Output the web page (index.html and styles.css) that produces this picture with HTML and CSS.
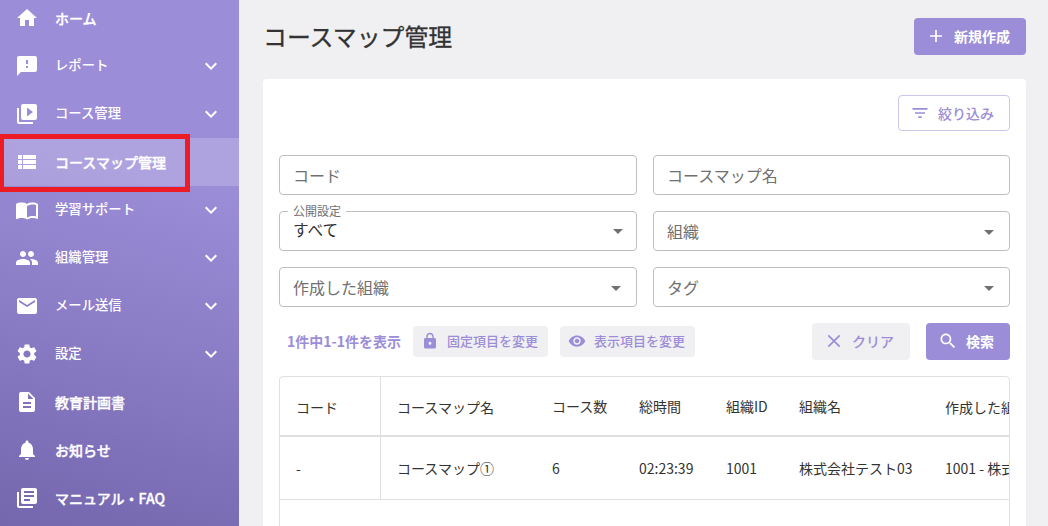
FILE: index.html
```html
<!DOCTYPE html>
<html lang="ja">
<head>
<meta charset="utf-8">
<title>コースマップ管理</title>
<link rel="stylesheet" href="styles.css">
</head>
<body>
<div class="app">
  <nav class="sidebar">
    <a class="item"><svg class="icon" viewBox="0 0 24 24"><path d="M10 20v-6h4v6h5v-8h3L12 3 2 12h3v8z"/></svg><span class="label">ホーム</span></a>
    <a class="item group"><svg class="icon" viewBox="0 0 24 24"><path d="M20 2H4c-1.1 0-1.99.9-1.99 2L2 22l4-4h14c1.1 0 2-.9 2-2V4c0-1.1-.9-2-2-2zm-7 12h-2v-2h2v2zm0-4h-2V6h2v4z"/></svg><span class="label">レポート</span><svg class="icon chevron" viewBox="0 0 24 24"><path d="M16.59 8.59 12 13.17 7.41 8.59 6 10l6 6 6-6z"/></svg></a>
    <a class="item group"><svg class="icon" viewBox="0 0 24 24"><path d="M4 6H2v14c0 1.1.9 2 2 2h14v-2H4V6zm16-4H8c-1.1 0-2 .9-2 2v12c0 1.1.9 2 2 2h12c1.1 0 2-.9 2-2V4c0-1.1-.9-2-2-2zm-8 12.500v-9l6 4.500-6 4.500z"/></svg><span class="label">コース管理</span><svg class="icon chevron" viewBox="0 0 24 24"><path d="M16.59 8.59 12 13.17 7.41 8.59 6 10l6 6 6-6z"/></svg></a>
    <a class="item selected"><svg class="icon" viewBox="0 0 24 24"><path d="M3 14h4v-4H3v4zm0 5h4v-4H3v4zM3 9h4V5H3v4zm5 5h13v-4H8v4zm0 5h13v-4H8v4zM8 5v4h13V5H8z"/></svg><span class="label">コースマップ管理</span><span class="highlight"></span></a>
    <a class="item group"><svg class="icon" viewBox="0 0 24 24"><path d="M21 5c-1.110-.35-2.330-.5-3.500-.5-1.950 0-4.050.4-5.500 1.500-1.450-1.100-3.550-1.500-5.500-1.500S2.450 4.900 1 6v14.650c0 .25.25.5.5.5.1 0 .15-.05.25-.05C3.100 20.450 5.050 20 6.500 20c1.950 0 4.050.4 5.500 1.500 1.350-.85 3.800-1.500 5.500-1.500 1.650 0 3.350.3 4.750 1.050.1.05.15.05.25.05.25 0 .5-.25.5-.5V6c-.6-.45-1.250-.75-2-1zm0 13.500c-1.100-.35-2.300-.5-3.500-.5-1.700 0-4.150.65-5.500 1.500V8c1.350-.85 3.800-1.500 5.500-1.500 1.200 0 2.400.15 3.500.5v11.500z"/></svg><span class="label">学習サポート</span><svg class="icon chevron" viewBox="0 0 24 24"><path d="M16.59 8.59 12 13.17 7.41 8.59 6 10l6 6 6-6z"/></svg></a>
    <a class="item group"><svg class="icon" viewBox="0 0 24 24"><path d="M16 11c1.660 0 2.990-1.340 2.990-3S17.660 5 16 5s-3 1.340-3 3 1.340 3 3 3zm-8 0c1.660 0 2.990-1.340 2.990-3S9.660 5 8 5 5 6.340 5 8s1.340 3 3 3zm0 2c-2.330 0-7 1.170-7 3.500V19h14v-2.500c0-2.330-4.670-3.500-7-3.500zm8 0c-.29 0-.62.02-.97.05 1.160.84 1.970 1.970 1.970 3.450V19h6v-2.500c0-2.330-4.670-3.500-7-3.500z"/></svg><span class="label">組織管理</span><svg class="icon chevron" viewBox="0 0 24 24"><path d="M16.59 8.59 12 13.17 7.41 8.59 6 10l6 6 6-6z"/></svg></a>
    <a class="item group"><svg class="icon" viewBox="0 0 24 24"><path d="M20 4H4c-1.100 0-1.990.9-1.990 2L2 18c0 1.100.9 2 2 2h16c1.100 0 2-.9 2-2V6c0-1.100-.9-2-2-2zm0 4-8 5-8-5V6l8 5 8-5v2z"/></svg><span class="label">メール送信</span><svg class="icon chevron" viewBox="0 0 24 24"><path d="M16.59 8.59 12 13.17 7.41 8.59 6 10l6 6 6-6z"/></svg></a>
    <a class="item group"><svg class="icon" viewBox="0 0 24 24"><path d="M19.140 12.940c.04-.3.06-.61.06-.94 0-.32-.02-.64-.07-.94l2.030-1.580c.18-.14.23-.41.12-.61l-1.920-3.320c-.12-.22-.37-.29-.59-.22l-2.390.96c-.5-.38-1.030-.7-1.620-.94l-.36-2.540c-.04-.24-.24-.41-.48-.41h-3.840c-.24 0-.43.17-.47.41l-.36 2.540c-.59.24-1.130.57-1.620.94l-2.390-.96c-.22-.08-.47 0-.59.22L2.740 8.870c-.12.21-.08.47.12.61l2.030 1.580c-.05.3-.09.63-.09.94s.02.64.07.94l-2.030 1.580c-.18.14-.23.41-.12.61l1.920 3.320c.12.22.37.29.59.22l2.390-.96c.5.38 1.030.7 1.620.94l.36 2.540c.05.24.24.41.48.41h3.840c.24 0 .44-.17.47-.41l.36-2.540c.59-.24 1.130-.56 1.620-.94l2.390.96c.22.08.47 0 .59-.22l1.920-3.320c.12-.22.07-.47-.12-.61l-2.010-1.580zM12 15.600c-1.980 0-3.600-1.620-3.600-3.600s1.620-3.600 3.600-3.600 3.600 1.620 3.600 3.600-1.620 3.600-3.600 3.600z"/></svg><span class="label">設定</span><svg class="icon chevron" viewBox="0 0 24 24"><path d="M16.59 8.59 12 13.17 7.41 8.59 6 10l6 6 6-6z"/></svg></a>
    <a class="item"><svg class="icon" viewBox="0 0 24 24"><path d="M14 2H6c-1.100 0-1.990.9-1.990 2L4 20c0 1.100.89 2 1.990 2H18c1.100 0 2-.9 2-2V8l-6-6zm2 16H8v-2h8v2zm0-4H8v-2h8v2zm-3-5V3.500L18.500 9H13z"/></svg><span class="label">教育計画書</span></a>
    <a class="item"><svg class="icon" viewBox="0 0 24 24"><path d="M12 22c1.100 0 2-.9 2-2h-4c0 1.100.89 2 2 2zm6-6v-5c0-3.070-1.640-5.640-4.500-6.320V4c0-.83-.67-1.500-1.500-1.500s-1.500.67-1.500 1.500v.68C7.630 5.360 6 7.920 6 11v5l-2 2v1h16v-1l-2-2z"/></svg><span class="label">お知らせ</span></a>
    <a class="item"><svg class="icon" viewBox="0 0 24 24"><path d="M4 6H2v14c0 1.100.9 2 2 2h14v-2H4V6zm16-4H8c-1.100 0-2 .9-2 2v12c0 1.100.9 2 2 2h12c1.100 0 2-.9 2-2V4c0-1.100-.9-2-2-2zm-1 9H9V9h10v2zm-4 4H9v-2h6v2zm4-8H9V5h10v2z"/></svg><span class="label">マニュアル・FAQ</span></a>
  </nav>

  <main class="main">
    <header class="header">
      <h1 class="title">コースマップ管理</h1>
      <button class="btn primary create"><svg class="btn-icon" viewBox="0 0 20 20"><path d="M4 10h12M10 4v12" class="line"/></svg><span class="text">新規作成</span></button>
    </header>

    <section class="card">
      <div class="card-top">
        <button class="btn outlined"><svg class="btn-icon" viewBox="0 0 24 24"><path d="M10 18h4v-2h-4v2zM3 6v2h18V6H3zm3 7h12v-2H6v2z"/></svg>絞り込み</button>
      </div>

      <div class="fields">
        <div class="field">コード</div>
        <div class="field">コースマップ名</div>
        <div class="field select filled"><span class="floating">公開設定</span><span class="value">すべて</span><svg class="caret" viewBox="0 0 24 24"><path d="m7 10 5 5 5-5z"/></svg></div>
        <div class="field select"><span>組織</span><svg class="caret" viewBox="0 0 24 24"><path d="m7 10 5 5 5-5z"/></svg></div>
        <div class="field select"><span>作成した組織</span><svg class="caret" viewBox="0 0 24 24"><path d="m7 10 5 5 5-5z"/></svg></div>
        <div class="field select"><span>タグ</span><svg class="caret" viewBox="0 0 24 24"><path d="m7 10 5 5 5-5z"/></svg></div>
      </div>

      <div class="toolbar">
        <span class="count text">1件中1-1件を表示</span>
        <button class="btn soft small"><svg class="small-icon" viewBox="0 0 24 24"><path d="M18 8h-1V6c0-2.760-2.240-5-5-5S7 3.240 7 6v2H6c-1.100 0-2 .9-2 2v10c0 1.100.9 2 2 2h12c1.100 0 2-.9 2-2V10c0-1.100-.9-2-2-2zm-6 9c-1.100 0-2-.9-2-2s.9-2 2-2 2 .9 2 2-.9 2-2 2zm3.100-9H8.900V6c0-1.710 1.390-3.100 3.100-3.100s3.100 1.390 3.100 3.100v2z"/></svg><span class="text">固定項目を変更</span></button>
        <button class="btn soft small"><svg class="small-icon" viewBox="0 0 24 24"><path d="M12 4.500C7 4.500 2.730 7.610 1 12c1.730 4.390 6 7.500 11 7.500s9.270-3.110 11-7.500c-1.730-4.390-6-7.500-11-7.500zM12 17c-2.760 0-5-2.240-5-5s2.240-5 5-5 5 2.240 5 5-2.240 5-5 5zm0-8c-1.660 0-3 1.340-3 3s1.340 3 3 3 3-1.340 3-3-1.340-3-3-3z"/></svg><span class="text">表示項目を変更</span></button>
        <div class="actions">
          <button class="btn soft clear"><svg class="btn-icon" viewBox="0 0 20 20"><path d="M4.300 4.300l11.400 11.400M15.700 4.300L4.300 15.700" class="line"/></svg><span class="text">クリア</span></button>
          <button class="btn primary search"><svg class="btn-icon" viewBox="0 0 24 24"><path d="M15.500 14h-.79l-.28-.27C15.410 12.590 16 11.110 16 9.500 16 5.910 13.090 3 9.500 3S3 5.910 3 9.500 5.910 16 9.500 16c1.610 0 3.090-.59 4.230-1.570l.27.28v.79l5 4.990L20.490 19l-4.990-5zm-6 0C7.010 14 5 11.990 5 9.500S7.010 5 9.500 5 14 7.010 14 9.500 11.990 14 9.500 14z"/></svg><span class="text">検索</span></button>
        </div>
      </div>

      <div class="table">
        <div class="row head">
          <span class="cell pinned">コード</span><span class="cell low">コースマップ名</span><span class="cell">コース数</span><span class="cell">総時間</span><span class="cell">組織ID</span><span class="cell">組織名</span><span class="cell low">作成した組織</span>
        </div>
        <div class="row">
          <span class="cell pinned">-</span><span class="cell">コースマップ①</span><span class="cell">6</span><span class="cell">02:23:39</span><span class="cell">1001</span><span class="cell">株式会社テスト03</span><span class="cell">1001 - 株式会社テスト03</span>
        </div>
      </div>
    </section>
  </main>
</div>
</body>
</html>
```
FILE: styles.css
```css
* { box-sizing: border-box; }

body {
  margin: 0;
  height: 526px;
  overflow: hidden;
  background: #f0f0f2;
  color: #333;
  font-family: "Noto Sans CJK JP", sans-serif;
}

svg { display: block; flex: none; fill: currentColor; }

.app { display: flex; height: 526px; }

/* Sidebar */
.sidebar {
  flex: none;
  width: 239px;
  height: 526px;
  margin-right: 24px;
  overflow: hidden;
  background: linear-gradient(195deg, #9c8dd8 0, #9c8dd8 32%, #7467ae 100%);
  color: #fff;
}

.item {
  position: relative;
  display: flex;
  align-items: center;
  height: 48px;
  padding: 0 16px 0 15px;
  font-size: 14px;
  font-weight: 500;
  line-height: 20px;
  -webkit-text-stroke: .35px currentColor;
}

.item:first-child { margin-top: -6px; }

.icon { width: 24px; height: 24px; }

.label { margin-left: 16px; }

.group { font-size: 13.33px; -webkit-text-stroke: 0; }
.group .label { padding: 0 0 2px; }

.chevron { margin-left: auto; }

.selected { z-index: 1; background: rgba(255, 255, 255, .2); }

.highlight {
  position: absolute;
  top: -4px;
  left: -1px;
  width: 191px;
  height: 58px;
  border: 5px solid #ed1c24;
}

/* Page */
.main {
  flex: none;
  display: flex;
  flex-direction: column;
  width: 763px;
}

.header {
  flex: none;
  display: flex;
  align-items: flex-start;
  justify-content: space-between;
  height: 79px;
  padding-top: 18px;
}

.title {
  margin: 0;
  font-size: 23.9px;
  font-weight: 400;
  line-height: 35px;
  -webkit-text-stroke: .3px currentColor;
}

.btn {
  display: flex;
  align-items: center;
  margin: 0;
  padding: 0;
  border: 0;
  border-radius: 4px;
  font: 700 14px/20px "Noto Sans CJK JP", sans-serif;
  white-space: nowrap;
}

.text { padding-bottom: 2px; }

.primary { background: #9c8dd8; color: #fff; }
.soft { background: #f0f0f2; color: #9c8dd8; }

.outlined {
  width: 112px;
  height: 36px;
  padding-left: 11px;
  border: 1px solid #cdc6eb;
  background: #fff;
  color: #9c8dd8;
  font-weight: 500;
}

.btn-icon { width: 20px; height: 20px; margin-right: 8px; }
.create .btn-icon { margin-bottom: 1px; }
.line { fill: none; stroke: currentColor; stroke-width: 1.7; }

.create { width: 112px; height: 37px; padding-left: 12px; }

.card {
  flex: 1;
  padding: 16px 16px 0;
  border-radius: 4px 4px 0 0;
  background: #fff;
}

.card-top { display: flex; justify-content: flex-end; margin-bottom: 24px; }

/* Search fields */
.fields {
  display: grid;
  grid-template-columns: 358px 357px;
  grid-auto-rows: 40px;
  gap: 16px;
}

.field {
  position: relative;
  display: flex;
  align-items: center;
  padding: 0 13px;
  border: 1px solid #bfbfbf;
  border-radius: 4px;
  color: #707070;
  font-size: 16px;
  line-height: 24px;
}

.select { justify-content: space-between; padding-right: 8px; }
.select .caret { margin-top: 2px; }
.filled { padding: 0 6px 0 13px; color: #333; }
.filled .caret { margin-top: 0; }
.value { margin-top: -4px; font-size: 15.6px; }

.floating {
  position: absolute;
  top: -9px;
  left: 8px;
  padding: 0 5px;
  background: #fff;
  color: #707070;
  font-size: 12px;
  line-height: 16px;
}

.caret { width: 24px; height: 24px; color: #707070; }

/* Toolbar */
.toolbar {
  display: flex;
  align-items: center;
  height: 37px;
  margin: 16px 0;
  padding-left: 8px;
}

.count { width: 126px; color: #9c8dd8; font-size: 14px; font-weight: 700; line-height: 20px; }

.small {
  width: 135px;
  height: 31px;
  margin-right: 12px;
  padding-left: 8px;
  font-size: 13px;
  font-weight: 500;
}

.small-icon { width: 18px; height: 18px; margin: 0 8px 2px 0; }

.actions { display: flex; gap: 16px; margin-left: auto; }
.actions .btn-icon { margin-bottom: 2px; }
.clear { width: 98px; height: 37px; padding-left: 12px; font-weight: 500; }
.search { width: 84px; height: 37px; padding-left: 12px; }

/* Results */
.table {
  height: 160px;
  overflow: hidden;
  border: 1px solid #e0e0e0;
  border-radius: 4px;
  font-size: 14px;
  line-height: 20px;
}

.row {
  display: grid;
  grid-template-columns: 101px 155px 87px 87px 73px 146px 200px;
  height: 63px;
  border-bottom: 1px solid #e0e0e0;
}

.head { height: 60px; border-bottom-width: 2px; }

.cell {
  display: flex;
  align-items: center;
  padding-left: 16px;
  white-space: nowrap;
}

.pinned { border-right: 1px solid #e0e0e0; }
.head .pinned, .low { padding-top: 1px; }
```
